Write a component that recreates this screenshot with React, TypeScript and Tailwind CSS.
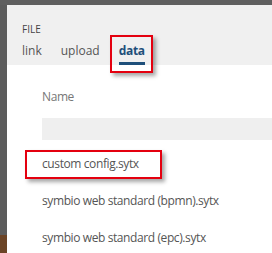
import React from 'react';

const files = ['custom config.sytx', 'symbio web standard (bpmn).sytx', 'symbio web standard (epc).sytx'];

const App = () => {
  return (
    <div
      className="w-[272px] h-[253px] overflow-hidden flex flex-col bg-white text-[#555] tracking-[-0.4px]"
      style={{ fontFamily: '"Open Sans", "Liberation Sans", sans-serif' }}
    >
      <div className="h-[5px] bg-[#5f5f5f] shrink-0" />
      <div className="flex flex-1">
        <div className="w-[7px] flex flex-col shrink-0">
          <div className="flex-1 bg-[#5c5c5c]" />
          <div className="h-[21px] bg-[#6b4426]" />
        </div>
        <div className="flex-1 flex flex-col">
          <div className="h-[60px] bg-[#f0f0f0] pl-[15px] pt-[17px]">
            <div className="text-[10px] leading-[14px] text-[#444] tracking-normal">FILE</div>
            <div className="flex gap-[19px] mt-[6px] text-[12px] tracking-normal">
              <div className="flex flex-col">
                <span className="leading-[17px] text-[#555]">link</span>
              </div>
              <div className="flex flex-col">
                <span className="leading-[17px] text-[#555]">upload</span>
              </div>
              <div className="relative flex flex-col">
                <span className="leading-[17px] font-bold text-[#1e4f7a] tracking-[-0.3px]">data</span>
                <span className="mt-[3px] h-[3px] bg-[#1e4f7a]" />
                <span className="absolute -left-[9px] -top-[7px] w-[43px] h-[38px] border-2 border-[#e4000f] shadow-[3px_3px_4px_rgba(0,0,0,0.35)]" />
              </div>
            </div>
          </div>
          <div className="pl-[35px] pt-[23px] text-[12px]">
            <div className="text-[#777] leading-[17px]">Name</div>
            <div className="mt-[13px] h-[22px] bg-[#efefef]" />
            <div className="mt-[5px] flex flex-col">
              {files.map((f, i) => (
                <div key={f} className="relative h-[37px] flex items-center">
                  <span>{f}</span>
                  {i === 0 && (
                    <span className="absolute -left-[17px] w-[137px] top-[5px] h-[29px] border-2 border-[#e4000f] shadow-[3px_3px_4px_rgba(0,0,0,0.35)]" />
                  )}
                </div>
              ))}
            </div>
          </div>
        </div>
      </div>
    </div>
  );
};

export default App;
